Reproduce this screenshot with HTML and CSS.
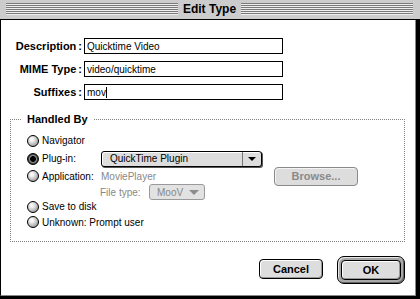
FILE: index.html
```html
<!DOCTYPE html>
<html>
<head>
<meta charset="utf-8">
<link rel="stylesheet" href="styles.css">
</head>
<body>
<div class="window">
  <div class="titlebar">
    <div class="stripes"></div>
    <div class="title">Edit Type</div>
    <div class="stripes"></div>
  </div>
  <div class="frame">
    <div class="content">
      <div class="fields">
        <div class="flabel">Description<span class="colon">:</span></div>
        <div class="field">Quicktime Video</div>
        <div class="flabel">MIME Type<span class="colon">:</span></div>
        <div class="field">video/quicktime</div>
        <div class="flabel">Suffixes<span class="colon">:</span></div>
        <div class="field">mov<span class="caret"></span></div>
      </div>

      <div class="group">
        <div class="group-title">Handled By</div>
        <div class="row r-nav"><span class="radio"></span><span class="rlabel">Navigator</span></div>
        <div class="row r-plug">
          <span class="radio on"></span><span class="rlabel col">Plug-in:</span>
          <div class="popup">
            <span class="popup-text">QuickTime Plugin</span>
            <span class="popup-arrow"><span class="tri"></span></span>
          </div>
        </div>
        <div class="row r-app">
          <span class="radio"></span><span class="rlabel col">Application:</span>
          <span class="value">MoviePlayer</span>
          <div class="btn browse">Browse...</div>
        </div>
        <div class="row r-ftype">
          <span class="dim">File type:</span>
          <div class="popup-small"><span class="small-text">MooV</span><span class="tri gray"></span></div>
        </div>
        <div class="row r-save"><span class="radio"></span><span class="rlabel">Save to disk</span></div>
        <div class="row r-unk"><span class="radio"></span><span class="rlabel">Unknown: Prompt user</span></div>
      </div>

      <div class="buttons">
        <div class="btn cancel">Cancel</div>
        <div class="ring"><div class="btn ok">OK</div></div>
      </div>
    </div>
  </div>
</div>
</body>
</html>
```

FILE: styles.css
```css
html, body {
  margin: 0;
  padding: 0;
  background: #fff;
}
body {
  width: 420px;
  height: 299px;
  overflow: hidden;
  font-family: "Liberation Sans", Arial, sans-serif;
  color: #000;
}
.window {
  width: 420px;
  height: 299px;
  display: flex;
  flex-direction: column;
}
.titlebar {
  height: 19px;
  border-bottom: 1px solid #000;
  background: #cccccc;
  display: flex;
  align-items: flex-start;
  padding: 0 7px 0 6px;
}
.stripes {
  flex: 1;
  height: 12px;
  margin-top: 3px;
  background: repeating-linear-gradient(to bottom, #7a7a7a 0 1px, #eeeeee 1px 2px);
}
.title {
  font-weight: bold;
  font-size: 12px;
  line-height: 19px;
  margin: 0 5px;
}
.frame {
  flex: 1;
  display: flex;
  border-right: 4px solid #000;
  border-bottom: 3px solid #000;
}
.content {
  flex: 1;
  display: flex;
  flex-direction: column;
  border-left: 1px solid #000;
  border-right: 1px solid #888;
  border-bottom: 1px solid #888;
  padding-top: 18px;
  background: #fff;
}
.fields {
  display: grid;
  grid-template-columns: 81px 199px;
  column-gap: 2px;
  row-gap: 7px;
  align-items: center;
}
.flabel {
  text-align: right;
  font-weight: bold;
  font-size: 11px;
  line-height: 14px;
}
.colon {
  margin-left: 2px;
}
.field {
  box-sizing: border-box;
  height: 16px;
  border: 1px solid #000;
  font-size: 10px;
  line-height: 14px;
  padding: 1px 0 0 2px;
  white-space: nowrap;
}
.caret {
  display: inline-block;
  width: 1px;
  height: 11px;
  background: #000;
  vertical-align: -2px;
}
.group {
  position: relative;
  margin: 19px 10px 0 9px;
  border: 1px dotted #808080;
  padding: 12px 0 10px 16px;
}
.group-title {
  position: absolute;
  top: -8px;
  left: 11px;
  padding: 0 5px;
  background: #fff;
  font-weight: bold;
  font-size: 11px;
  line-height: 14px;
}
.row {
  display: flex;
  align-items: center;
  font-size: 10px;
  white-space: nowrap;
}
.r-nav { height: 17px; }
.r-plug { height: 19px; }
.r-app { height: 16px; }
.r-ftype { height: 16px; padding-left: 73px; }
.r-save { height: 13px; }
.r-unk { height: 18px; }
.radio {
  box-sizing: border-box;
  width: 12px;
  height: 12px;
  border-radius: 50%;
  border: 1px solid #000;
  background: radial-gradient(circle at 38% 35%, #ffffff 0, #eeeeee 22%, #b0b0b0 65%, #6e6e6e 100%);
  flex-shrink: 0;
  margin-right: 3px;
}
.radio.on {
  background: radial-gradient(circle at 50% 50%, #000 0 2.6px, #8a8a8a 3.2px 3.6px, #3a3a3a 4.6px);
}
.rlabel.col {
  width: 59px;
}
.popup {
  box-sizing: border-box;
  width: 161px;
  height: 16px;
  border: 1px solid #000;
  border-radius: 3px;
  background: #dddddd;
  display: flex;
  box-shadow: inset 1px 1px 0 #fff, 1px 1px 0 #555;
}
.popup-text {
  flex: 1;
  padding-left: 8px;
  line-height: 14px;
}
.popup-arrow {
  box-sizing: border-box;
  width: 19px;
  border-left: 1px solid #777;
  display: flex;
  align-items: center;
  justify-content: center;
}
.tri {
  width: 0;
  height: 0;
  border-left: 4px solid transparent;
  border-right: 4px solid transparent;
  border-top: 4px solid #000;
}
.tri.gray {
  border-left-width: 5px;
  border-right-width: 5px;
  border-top: 5px solid #8c8c8c;
  margin-left: 6px;
}
.value {
  width: 173px;
  color: #888;
}
.dim {
  color: #888;
  width: 49px;
}
.popup-small {
  box-sizing: border-box;
  width: 56px;
  height: 16px;
  border: 1px solid #999;
  border-radius: 3px;
  background: #e2e2e2;
  display: flex;
  align-items: center;
  padding-left: 7px;
  color: #888;
}
.btn {
  box-sizing: border-box;
  border: 1px solid #000;
  border-radius: 4px;
  background: #dddddd;
  font-weight: bold;
  font-size: 11px;
  text-align: center;
  box-shadow: inset 1px 1px 0 #fff, inset -1px -1px 0 #999;
}
.browse {
  width: 84px;
  height: 19px;
  line-height: 17px;
  border-color: #8a8a8a;
  color: #8a8a8a;
  box-shadow: inset 1px 1px 0 #f4f4f4;
}
.buttons {
  display: flex;
  justify-content: flex-end;
  align-items: flex-start;
  gap: 14px;
  padding-right: 10px;
  margin-top: 14px;
}
.cancel {
  width: 64px;
  height: 20px;
  line-height: 18px;
  margin-top: 3px;
}
.ring {
  box-sizing: border-box;
  width: 68px;
  height: 28px;
  border: 1px solid #000;
  border-radius: 7px;
  padding: 3px;
  background: #a8a8a8;
  box-shadow: inset 1px 1px 0 #e8e8e8, inset -1px -1px 0 #666;
}
.ok {
  width: 60px;
  height: 20px;
  line-height: 18px;
}
```
